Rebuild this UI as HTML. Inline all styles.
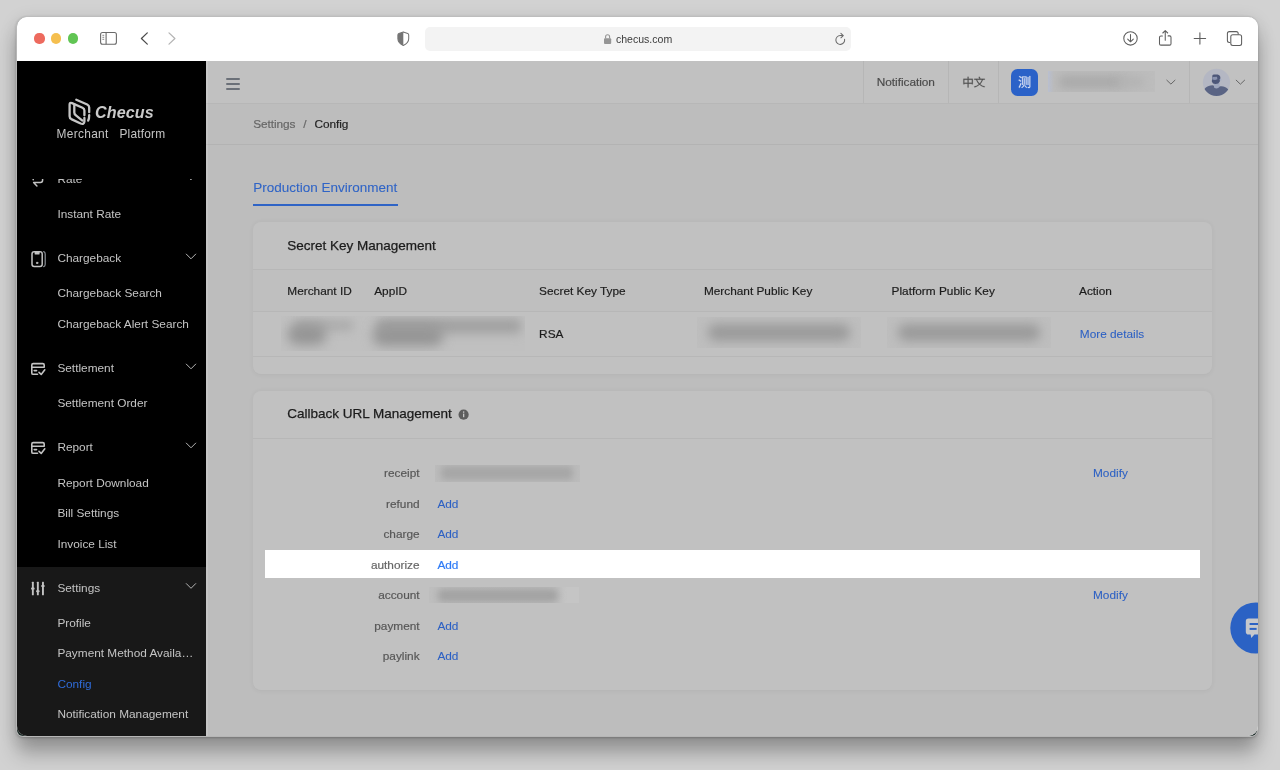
<!DOCTYPE html>
<html><head><meta charset="utf-8"><title>Checus Merchant Platform</title>
<style>
*{box-sizing:border-box;margin:0;padding:0}
html,body{width:1280px;height:770px;overflow:hidden}
body{background:#d2d2d2;font-family:"Liberation Sans",sans-serif;position:relative;-webkit-font-smoothing:antialiased}
.abs{position:absolute}
#shadow{position:absolute;left:17.2px;top:17.2px;width:1240.3px;height:719.1px;border-radius:10px 10px 6px 6px;box-shadow:0 0 0 0.9px rgba(190,190,190,.9),0 1px 2.5px 0.5px rgba(0,0,0,.2),0 18px 20px rgba(0,0,0,.25),0 4px 18px rgba(0,0,0,.15);background:#1b2a27}
#win{position:absolute;left:17.2px;top:17.2px;width:1241.1px;height:719.1px;border-radius:10px;overflow:hidden;background:#fff}
/* everything inside #win is positioned in page coords via an offset wrapper */
#pg{will-change:transform;position:absolute;left:-17.2px;top:-17.2px;width:1280px;height:770px}
#toolbar{position:absolute;left:17px;top:17px;width:1242px;height:44px;background:#fff}
.tl{position:absolute;top:33.35px;width:10.2px;height:10.2px;border-radius:50%}
#url{position:absolute;left:424.5px;top:27px;width:426px;height:24px;border-radius:5px;background:#f3f3f3}
#urltxt{position:absolute;left:615.9px;top:32.7px;font-size:10.55px;color:#3c3c3c;line-height:13px;letter-spacing:0}
#side{position:absolute;left:17px;top:61px;width:189px;height:676px;background:#000;overflow:hidden}
#sideset{position:absolute;left:17px;top:567px;width:189px;height:170px;background:#181818}
#hdr{position:absolute;left:206px;top:61px;width:1053px;height:42.5px;background:#c1c1c1;border-bottom:1px solid #b7b7b7}
#bc{position:absolute;left:206px;top:103.5px;width:1053px;height:41px;background:#bdbdbd;border-bottom:1px solid #b3b3b3}
#main{position:absolute;left:206px;top:144.5px;width:1053px;height:593px;background:#bdbdbd}
.vd{position:absolute;top:61px;width:1px;height:42px;background:#b6b6b6}
.t12{position:absolute;font-size:11.83px;line-height:14px;white-space:nowrap;-webkit-text-stroke:0.18px currentColor}
.t135{position:absolute;font-size:13.5px;line-height:16px;white-space:nowrap;-webkit-text-stroke:0.25px currentColor}
.ns{-webkit-text-stroke:0 transparent}
.card{position:absolute;left:253px;width:958.7px;background:#c1c1c1;border-radius:8px;box-shadow:0 0.5px 5px rgba(0,0,0,.055)}
.hl{position:absolute;height:1px;background:#b7b7b7}
.lbl{color:#555;text-align:right;width:120px}
.lnk{color:#2c60c4;-webkit-text-stroke:0.06px #2c60c4}
.blurbox{position:absolute;overflow:hidden;background:#bfbfbf}
.blurbox i{position:absolute;display:block;background:#9a9a9a;filter:blur(3.2px);border-radius:4px}
</style></head><body>
<div id="shadow"></div>
<div id="win"><div id="pg">

<div id="toolbar"></div>
<div class="tl" style="left:34.4px;background:#ed6a5e"></div>
<div class="tl" style="left:51.3px;background:#f5bf4f"></div>
<div class="tl" style="left:68.2px;background:#61c554"></div>

<div id="url"></div>
<svg class="abs" style="left:0;top:17px" width="1280" height="44" viewBox="0 17 1280 44" fill="none">
 <!-- sidebar toggle -->
 <rect x="100.6" y="32.5" width="15.8" height="11.8" rx="2" stroke="#6a6a6a" stroke-width="1.1"/>
 <line x1="106.1" y1="32.5" x2="106.1" y2="44.3" stroke="#6a6a6a" stroke-width="1.1"/>
 <path d="M102.4 35.3h1.8M102.4 37.3h1.8M102.4 39.3h1.8" stroke="#6a6a6a" stroke-width="0.8"/>
 <!-- back / fwd -->
 <path d="M147.3 32.9 L141.4 38.5 L147.3 44.1" stroke="#4a4a4a" stroke-width="1.25" stroke-linecap="round" stroke-linejoin="round"/>
 <path d="M169 32.9 L174.9 38.5 L169 44.1" stroke="#b4b4b4" stroke-width="1.25" stroke-linecap="round" stroke-linejoin="round"/>
 <!-- shield -->
 <path d="M403.3 31.9 L398.9 33.5 Q397.9 33.9 397.9 34.9 V38.8 C397.9 41.9 400.2 44 403.3 45.4 C406.4 44 408.7 41.9 408.7 38.8 V34.9 Q408.7 33.9 407.7 33.5 Z" stroke="#737373" stroke-width="1.05" stroke-linejoin="round"/>
 <path d="M403.3 31.9 L398.9 33.5 Q397.9 33.9 397.9 34.9 V38.8 C397.9 41.9 400.2 44 403.3 45.4Z" fill="#747474"/>
 <!-- lock -->
 <rect x="604" y="38.3" width="7.2" height="5.6" rx="1" fill="#959595"/>
 <path d="M605.6 38.5 V36.8 a2 2 0 0 1 4 0 V38.5" stroke="#959595" stroke-width="1.1"/>
 <!-- reload -->
 <path d="M844.6 39.3 A4.4 4.4 0 1 1 840.2 35.6 H842.6" stroke="#6a6a6a" stroke-width="1.05" stroke-linecap="round"/>
 <path d="M840.9 33.4 L843.3 35.6 L840.9 37.8" stroke="#6a6a6a" stroke-width="1.05" stroke-linecap="round" stroke-linejoin="round"/>
 <!-- download -->
 <circle cx="1130.5" cy="38.4" r="6.7" stroke="#5e5e5e" stroke-width="1.05"/>
 <path d="M1130.5 34.6 V41.6 M1127.7 39.1 L1130.5 41.8 L1133.3 39.1" stroke="#5e5e5e" stroke-width="1.05" stroke-linecap="round" stroke-linejoin="round"/>
 <!-- share -->
 <path d="M1162.4 35.9 H1160.9 a1.4 1.4 0 0 0 -1.4 1.4 V43.7 a1.4 1.4 0 0 0 1.4 1.4 H1169.6 a1.4 1.4 0 0 0 1.4 -1.4 V37.3 a1.4 1.4 0 0 0 -1.4 -1.4 H1168.1" stroke="#5e5e5e" stroke-width="1.05" stroke-linecap="round"/>
 <path d="M1165.25 40.2 V30.8 M1162.8 33 L1165.25 30.6 L1167.7 33" stroke="#5e5e5e" stroke-width="1.05" stroke-linecap="round" stroke-linejoin="round"/>
 <!-- plus -->
 <path d="M1194.2 38.45 H1205.6 M1199.9 32.8 V44.1" stroke="#5e5e5e" stroke-width="1.1" stroke-linecap="round"/>
 <!-- tabs -->
 <path d="M1230.2 42.4 H1229.4 a2 2 0 0 1 -2 -2 V33.6 a2 2 0 0 1 2 -2 H1236.2 a2 2 0 0 1 2 2 V34.4" stroke="#5e5e5e" stroke-width="1.05"/>
 <rect x="1230.8" y="34.8" width="10.8" height="10.6" rx="2" stroke="#5e5e5e" stroke-width="1.05"/>
</svg>
<div id="urltxt">checus.com</div>

<!-- PAGE -->
<div id="hdr"></div><div id="bc"></div><div id="main"></div>
<div id="side"></div><div id="sideset"></div>

<div class="abs" style="left:206px;top:61px;width:2.1px;height:676px;background:rgba(255,255,255,.13)"></div>
<!-- SIDEBAR CONTENT -->
<div class="abs" id="menuclip" style="left:17px;top:178.7px;width:189px;height:559px;overflow:hidden"><div class="abs" style="left:-17px;top:-178.7px;width:1280px;height:770px">
<div class="t12 ns" style="left:57.4px;top:171.7px;color:#c4c4c4">Rate</div>
<div class="t12 ns" style="left:57.4px;top:206.7px;color:#c4c4c4">Instant Rate</div>
<div class="t12 ns" style="left:57.4px;top:250.7px;color:#c4c4c4">Chargeback</div>
<div class="t12 ns" style="left:57.4px;top:285.7px;color:#c4c4c4">Chargeback Search</div>
<div class="t12 ns" style="left:57.4px;top:316.7px;color:#c4c4c4">Chargeback Alert Search</div>
<div class="t12 ns" style="left:57.4px;top:360.7px;color:#c4c4c4">Settlement</div>
<div class="t12 ns" style="left:57.4px;top:396.3px;color:#c4c4c4">Settlement Order</div>
<div class="t12 ns" style="left:57.4px;top:440.3px;color:#c4c4c4">Report</div>
<div class="t12 ns" style="left:57.4px;top:475.8px;color:#c4c4c4">Report Download</div>
<div class="t12 ns" style="left:57.4px;top:505.7px;color:#c4c4c4">Bill Settings</div>
<div class="t12 ns" style="left:57.4px;top:536.8px;color:#c4c4c4">Invoice List</div>
<div class="t12 ns" style="left:57.4px;top:580.8px;color:#c4c4c4">Settings</div>
<div class="t12 ns" style="left:57.4px;top:615.7px;color:#c4c4c4">Profile</div>
<div class="t12 ns" style="left:57.4px;top:646.2px;color:#c4c4c4">Payment Method Availa…</div>
<div class="t12 ns" style="left:57.4px;top:676.7px;color:#2f6bd8">Config</div>
<div class="t12 ns" style="left:57.4px;top:707.2px;color:#c4c4c4">Notification Management</div>
<svg class="abs" style="left:0;top:0" width="1280" height="770" viewBox="0 0 1280 770"><path d="M186.3 175.1 L191 179.8 L195.7 175.1" stroke="#b4b4b4" stroke-width="1.0" fill="none" stroke-linecap="round" stroke-linejoin="round"/><path d="M186.3 254.1 L191 258.8 L195.7 254.1" stroke="#b4b4b4" stroke-width="1.0" fill="none" stroke-linecap="round" stroke-linejoin="round"/><path d="M186.3 364.1 L191 368.8 L195.7 364.1" stroke="#b4b4b4" stroke-width="1.0" fill="none" stroke-linecap="round" stroke-linejoin="round"/><path d="M186.3 443.1 L191 447.8 L195.7 443.1" stroke="#b4b4b4" stroke-width="1.0" fill="none" stroke-linecap="round" stroke-linejoin="round"/><path d="M186.3 583.6 L191 588.3 L195.7 583.6" stroke="#b4b4b4" stroke-width="1.0" fill="none" stroke-linecap="round" stroke-linejoin="round"/>
<g stroke="#c2c2c2" stroke-width="1.5" fill="none" stroke-linecap="round" stroke-linejoin="round">
 <!-- rate (swap) -->
 <path d="M42.6 176.5 V180.3 a2.2 2.2 0 0 1 -2.2 2.2 H33.6 L36.9 186"/>
 <path d="M33.2 179.8 V177.7 a2.2 2.2 0 0 1 2.2 -2.2 H42.2 L38.9 172"/>
 <!-- chargeback phone -->
 <rect x="32" y="251.8" width="10.2" height="14.6" rx="2.2"/>
 <path d="M34.6 252 H39.6 V253.7 Q39.6 254.6 38.7 254.6 H35.5 Q34.6 254.6 34.6 253.7Z" fill="#c2c2c2" stroke="none"/>
 <circle cx="37.1" cy="262.9" r="0.75" fill="#c2c2c2" stroke-width="0.9"/>
 <path d="M43.7 251.6 q1.5 0.4 1.5 2.4 V264.2 q0 2 -1.5 2.4" stroke="#8b9097" stroke-width="1.2"/>
</g>
<g transform="translate(0,0)" stroke="#c3c3c3" stroke-width="1.6" fill="none" stroke-linecap="round" stroke-linejoin="round">
 <path d="M37.5 374.3 H33.2 a1.4 1.4 0 0 1 -1.4 -1.4 V365 a1.4 1.4 0 0 1 1.4 -1.4 H42.8 a1.4 1.4 0 0 1 1.4 1.4 V367.2 H31.8"/>
 <path d="M34.2 370.6 H36.6"/>
 <path d="M39 372.4 L41.2 374.4 L44.8 369.8"/>
</g><g transform="translate(0,79)" stroke="#c3c3c3" stroke-width="1.6" fill="none" stroke-linecap="round" stroke-linejoin="round">
 <path d="M37.5 374.3 H33.2 a1.4 1.4 0 0 1 -1.4 -1.4 V365 a1.4 1.4 0 0 1 1.4 -1.4 H42.8 a1.4 1.4 0 0 1 1.4 1.4 V367.2 H31.8"/>
 <path d="M34.2 370.6 H36.6"/>
 <path d="M39 372.4 L41.2 374.4 L44.8 369.8"/>
</g><g fill="#c2c2c2">
 <rect x="31.9" y="581.8" width="1.9" height="13.5" rx="0.5"/><rect x="31.05" y="587.6" width="3.6" height="2" rx="0.9"/>
 <rect x="36.9" y="581.8" width="1.9" height="13.5" rx="0.5"/><rect x="36.05" y="590.2" width="3.6" height="2" rx="0.9"/>
 <rect x="42.0" y="581.8" width="1.9" height="13.5" rx="0.5"/><rect x="41.15" y="585" width="3.6" height="2" rx="0.9"/>
</g></svg>
</div></div>
<svg class="abs" style="left:60px;top:94px" width="40" height="36" viewBox="60 94 40 36" fill="none" stroke="#c6c6c6" stroke-width="2.3" stroke-linecap="round" stroke-linejoin="round">
 <path d="M84.4 115.2 V110.6 Q84.4 108.6 82.5 107.7 L72 103.1 Q69.6 102.2 69.6 104.6 V116.2 Q69.6 118.2 71.3 119.1 L80.6 123.5 Q84 124.8 84.4 121.6 V117.9"/>
 <path d="M74.3 104.2 V112.4 Q74.3 114.2 75.9 115.3 L82.4 120.6"/>
 <path d="M76.3 99.8 L87.2 104.5 Q89.2 105.5 89.2 107.6 V112.2"/>
 <path d="M89.2 115.2 Q89.2 118.6 88.2 120.6"/>
</svg>
<div class="abs" style="left:95px;top:102.1px;font-size:16.1px;line-height:20px;font-weight:bold;font-style:italic;color:#cacaca;white-space:nowrap;letter-spacing:0.1px">Checus</div>
<div class="abs" style="left:56.5px;top:126.6px;font-size:11.9px;line-height:14px;color:#c4c4c4;white-space:pre;letter-spacing:0.32px">Merchant</div>
<div class="abs" style="left:119.4px;top:126.6px;font-size:11.9px;line-height:14px;color:#c4c4c4;white-space:pre;letter-spacing:0.22px">Platform</div>
<!-- HEADER CONTENT -->
<div class="vd" style="left:863px"></div><div class="vd" style="left:948px"></div><div class="vd" style="left:997.6px"></div><div class="vd" style="left:1189px"></div>
<div class="abs" style="left:225.7px;top:77.8px;width:14.6px;height:2px;background:#6b7078;border-radius:1px"></div>
<div class="abs" style="left:225.7px;top:83px;width:14.6px;height:2px;background:#6b7078;border-radius:1px"></div>
<div class="abs" style="left:225.7px;top:88.1px;width:14.6px;height:2px;background:#6b7078;border-radius:1px"></div>
<div class="t12" style="left:876.8px;top:74.7px;color:#4c4c4c;letter-spacing:-0.04px">Notification</div>
<div class="abs" style="left:1011.2px;top:68.5px;width:27px;height:27.3px;border-radius:6.5px;background:#2b62c8"></div>
<svg class="abs" style="left:0;top:61px" width="1280" height="44" viewBox="0 61 1280 44"><path transform="translate(962.3,86.51) scale(0.01160,-0.01160)" fill="#505050" stroke="#505050" stroke-width="16" d="M458 840V661H96V186H171V248H458V-79H537V248H825V191H902V661H537V840ZM171 322V588H458V322ZM825 322H537V588H825Z"/><path transform="translate(973.7,86.51) scale(0.01160,-0.01160)" fill="#505050" stroke="#505050" stroke-width="16" d="M423 823C453 774 485 707 497 666L580 693C566 734 531 799 501 847ZM50 664V590H206C265 438 344 307 447 200C337 108 202 40 36 -7C51 -25 75 -60 83 -78C250 -24 389 48 502 146C615 46 751 -28 915 -73C928 -52 950 -20 967 -4C807 36 671 107 560 201C661 304 738 432 796 590H954V664ZM504 253C410 348 336 462 284 590H711C661 455 592 344 504 253Z"/><path transform="translate(1018.0,86.92) scale(0.01320,-0.01320)" fill="#dce3f4" stroke="#dce3f4" stroke-width="22" d="M486 92C537 42 596 -28 624 -73L673 -39C644 4 584 72 533 121ZM312 782V154H371V724H588V157H649V782ZM867 827V7C867 -8 861 -13 847 -13C833 -14 786 -14 733 -13C742 -31 752 -60 755 -76C825 -77 868 -75 894 -64C919 -53 929 -34 929 7V827ZM730 750V151H790V750ZM446 653V299C446 178 426 53 259 -32C270 -41 289 -66 296 -78C476 13 504 164 504 298V653ZM81 776C137 745 209 697 243 665L289 726C253 756 180 800 126 829ZM38 506C93 475 166 430 202 400L247 460C209 489 135 532 81 560ZM58 -27 126 -67C168 25 218 148 254 253L194 292C154 180 98 50 58 -27Z"/><path d="M1166.8 80.2 L1170.9 84.1 L1175 80.2" stroke="#666" stroke-width="1.0" fill="none" stroke-linecap="round" stroke-linejoin="round"/><path d="M1236.2 80.2 L1240.4 84.2 L1244.6 80.2" stroke="#666" stroke-width="1.0" fill="none" stroke-linecap="round" stroke-linejoin="round"/></svg>
<div class="blurbox" style="left:1047.7px;top:70.7px;width:107.8px;height:21.8px;background:linear-gradient(90deg,#b9bfd0 0,#bcbcbc 6px,#bdbdbd 100%)"><i style="left:11px;top:5px;width:64px;height:12px;background:#a9a9a9;filter:blur(5px)"></i><i style="left:70px;top:6px;width:26px;height:10px;background:#b2b2b2;filter:blur(5px)"></i></div>
<svg class="abs" style="left:1202px;top:68px" width="29" height="29" viewBox="1202 68 29 29">
 <defs><clipPath id="avc"><circle cx="1216.5" cy="82.4" r="13.6"/></clipPath></defs>
 <circle cx="1216.5" cy="82.4" r="13.6" fill="#b4b7c3"/>
 <g clip-path="url(#avc)">
  <path d="M1202 96 C1203 88.5 1207 85.2 1212.5 85.2 L1216 86.6 L1221.5 86.2 C1226.5 86.6 1229.6 89 1231 96 V100 H1202Z" fill="#5a6484"/>
  <path d="M1214.2 82.5 L1219.4 81.5 L1219.7 86.8 Q1217 89.8 1214 87.4Z" fill="#9ea6bd"/>
  <path d="M1212.3 76.2 Q1212 74.5 1213.8 74.5 L1217.6 74.4 Q1220.5 75 1220.4 78 L1219.8 81.4 Q1218.6 83.9 1215.8 84 Q1212.5 84.2 1211.8 81.4 L1212 79.4 Z" fill="#4d5779"/>
  <path d="M1212.5 77 L1217 76.8 L1217.4 79.2 L1215 80 L1212.2 79.6Z" fill="#8a93b0"/>
  <circle cx="1220.5" cy="79.7" r="0.95" fill="#a3abc2"/>
 </g>
</svg>
<div class="t12" style="left:253.2px;top:117.1px;color:#666;letter-spacing:-0.08px">Settings</div>
<div class="t12" style="left:303.2px;top:117.1px;color:#666">/</div>
<div class="t12" style="left:314.4px;top:117.1px;color:#222;letter-spacing:-0.05px">Config</div>
<!-- MAIN CONTENT -->
<div class="t135" style="left:253.3px;top:179.6px;color:#2f64c6;-webkit-text-stroke:0.08px #2f64c6">Production Environment</div>
<div class="abs" style="left:253.4px;top:203.7px;width:144.4px;height:2px;background:#2f64c6"></div>
<div class="card" style="top:221.7px;height:152px"></div>
<div class="abs" style="left:253px;top:270px;width:958.7px;height:41.3px;background:#bfbfbf"></div>
<div class="hl" style="left:253px;top:269.2px;width:958.7px"></div>
<div class="hl" style="left:253px;top:311px;width:958.7px"></div>
<div class="hl" style="left:253px;top:356px;width:958.7px"></div>
<div class="t135" style="left:287.2px;top:237.5px;color:#1c1c1c">Secret Key Management</div>
<div class="t12" style="left:287.3px;top:284.2px;color:#1c1c1c">Merchant ID</div>
<div class="t12" style="left:374.2px;top:284.2px;color:#1c1c1c">AppID</div>
<div class="t12" style="left:539.1px;top:284.2px;color:#1c1c1c">Secret Key Type</div>
<div class="t12" style="left:703.9px;top:284.2px;color:#1c1c1c">Merchant Public Key</div>
<div class="t12" style="left:891.6px;top:284.2px;color:#1c1c1c">Platform Public Key</div>
<div class="t12" style="left:1079px;top:284.2px;color:#1c1c1c">Action</div>
<div class="t12" style="left:539.1px;top:326.7px;color:#1c1c1c">RSA</div>
<div class="t12 lnk" style="left:1079.8px;top:326.7px">More details</div>
<div class="blurbox" style="left:281px;top:316px;width:244px;height:35.2px;background:#c0c0c0"><i style="left:14px;top:4px;width:58px;height:11px;background:#ababab;filter:blur(5px)"></i><i style="left:7px;top:8px;width:38px;height:21px;background:#959595;filter:blur(6px);border-radius:9px"></i><i style="left:96px;top:3px;width:144px;height:14px;background:#9e9e9e;filter:blur(5.5px)"></i><i style="left:92px;top:10px;width:70px;height:20px;background:#959595;filter:blur(6px);border-radius:9px"></i></div>
<div class="blurbox" style="left:697.3px;top:317.3px;width:163.4px;height:31.2px;background:#bebebe"><i style="left:11px;top:7px;width:142px;height:17px;background:#9a9a9a;filter:blur(5.5px);border-radius:8px"></i></div>
<div class="blurbox" style="left:887.3px;top:317.3px;width:163.7px;height:31.2px;background:#bebebe"><i style="left:11px;top:7px;width:142px;height:17px;background:#9a9a9a;filter:blur(5.5px);border-radius:8px"></i></div>
<div class="card" style="top:390.6px;height:299px"></div>
<div class="hl" style="left:253px;top:437.6px;width:958.7px"></div>
<div class="t135" style="left:287.2px;top:406.4px;color:#1c1c1c">Callback URL Management</div>
<svg class="abs" style="left:458px;top:409px" width="11" height="11" viewBox="0 0 11 11"><circle cx="5.6" cy="5.7" r="5.1" fill="#5c5c5c"/><rect x="5" y="4.6" width="1.3" height="3.6" fill="#c6c6c6"/><circle cx="5.65" cy="3.1" r="0.8" fill="#c6c6c6"/></svg>
<div class="abs" style="left:265px;top:549.6px;width:935px;height:28.5px;background:#fff"></div>
<div class="t12 lbl" style="left:299.6px;top:466.3px;color:#575757">receipt</div>
<div class="t12 lnk" style="left:1093px;top:466.3px">Modify</div>
<div class="t12 lbl" style="left:299.6px;top:496.8px;color:#575757">refund</div>
<div class="t12 lnk" style="left:437.4px;top:496.8px">Add</div>
<div class="t12 lbl" style="left:299.6px;top:527.3px;color:#575757">charge</div>
<div class="t12 lnk" style="left:437.4px;top:527.3px">Add</div>
<div class="t12 lbl" style="left:299.6px;top:557.8px;color:#666">authorize</div>
<div class="t12" style="left:437.4px;top:557.8px;color:#2f7bf6">Add</div>
<div class="t12 lbl" style="left:299.6px;top:588.3px;color:#575757">account</div>
<div class="t12 lnk" style="left:1093px;top:588.3px">Modify</div>
<div class="t12 lbl" style="left:299.6px;top:618.8px;color:#575757">payment</div>
<div class="t12 lnk" style="left:437.4px;top:618.8px">Add</div>
<div class="t12 lbl" style="left:299.6px;top:649.3px;color:#575757">paylink</div>
<div class="t12 lnk" style="left:437.4px;top:649.3px">Add</div>
<div class="blurbox" style="left:435px;top:464.8px;width:145.3px;height:16.9px;background:#bcbcbc"><i style="left:6px;top:1.5px;width:132px;height:14px;background:#a6a6a6;filter:blur(3.6px)"></i></div>
<div class="blurbox" style="left:429px;top:587.1px;width:150px;height:16.2px;background:linear-gradient(90deg,#bebebe 0,#bdbdbd 82%,#c5c5c5 92%)"><i style="left:9px;top:1.5px;width:120px;height:13.5px;background:#a2a2a2;filter:blur(3.8px)"></i></div>
<svg class="abs" style="left:1229px;top:601px" width="34" height="54" viewBox="1229 601 34 54">
 <circle cx="1255.9" cy="628" r="25.6" fill="#2b62c4"/>
 <path d="M1248.6 618.6 H1262 V634.6 H1254.4 L1251.3 637.9 L1250.6 634.6 H1248.6 Q1245.8 634.6 1245.8 631.8 V621.4 Q1245.8 618.6 1248.6 618.6Z" fill="#c6c8cc"/>
 <rect x="1249.6" y="623" width="12" height="2" fill="#2b62c4"/><rect x="1249.6" y="627.9" width="7" height="2" fill="#2b62c4"/>
</svg>
<!--END-MAIN-->
</div></div>
</body></html>
